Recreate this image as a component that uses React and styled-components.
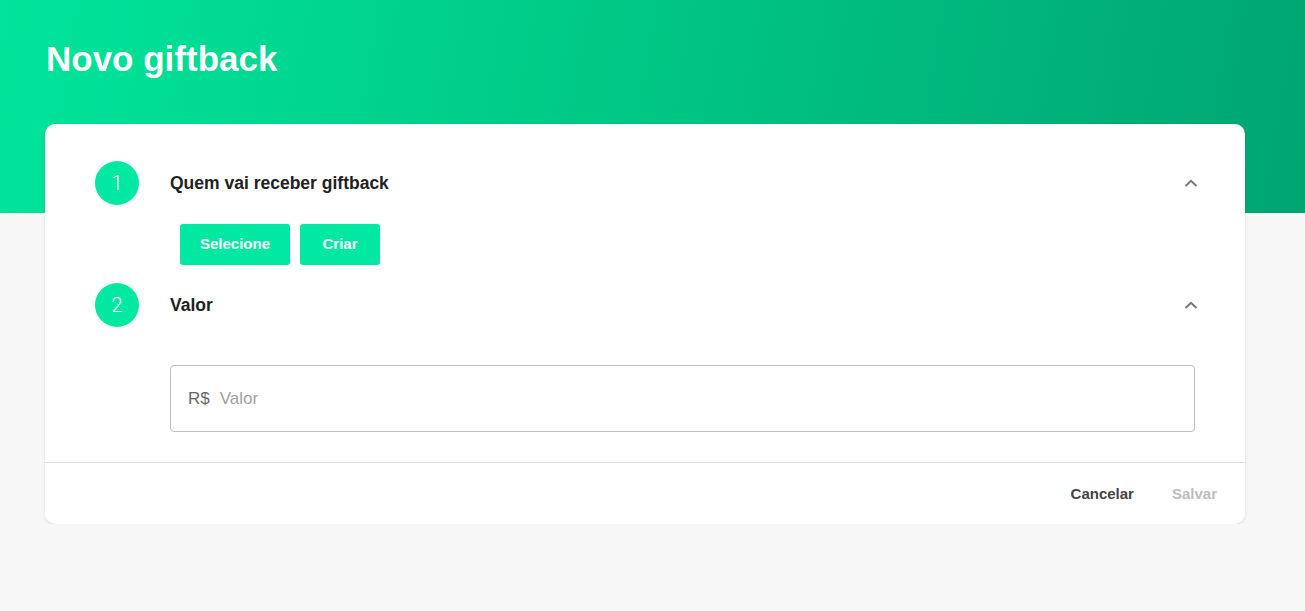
import React from "react";
import styled, { createGlobalStyle } from "styled-components";

const GlobalStyle = createGlobalStyle`
  body {
    margin: 0;
    background: #f7f7f7;
    font-family: "Liberation Sans", Arial, sans-serif;
  }
`;

const Hero = styled.div`
  height: 213px;
  box-sizing: border-box;
  padding: 38px 46px 0;
  background: linear-gradient(100deg, #00e59b 0%, #00c986 45%, #00a572 100%);
`;

const Title = styled.h1`
  margin: 0;
  font-size: 35px;
  font-weight: 700;
  color: #fff;
  line-height: 42px;
`;

const Card = styled.div`
  margin: -89px 60px 0 45px;
  background: #fff;
  border-radius: 10px;
  box-shadow: 0 1px 3px rgba(0, 0, 0, 0.12);
`;

const Body = styled.div`
  padding: 37px 46px 30px 50px;
`;

const StepRow = styled.div`
  display: flex;
  align-items: center;
  height: 44px;
  margin-top: ${(p) => p.$top || 0}px;
`;

const Circle = styled.div`
  width: 44px;
  height: 44px;
  border-radius: 50%;
  background: #00e8a2;
  color: #fff;
  display: flex;
  align-items: center;
  justify-content: center;
  font-family: Roboto, sans-serif;
  font-weight: 300;
  font-size: 20px;
`;

const StepTitle = styled.div`
  flex: 1;
  margin-left: 31px;
  font-size: 17.5px;
  font-weight: 700;
  color: #222;
`;

const Chevron = styled.svg`
  width: 16px;
  height: 16px;
`;

const Content = styled.div`
  padding: 0 4px 0 75px;
  margin-top: ${(p) => p.$top}px;
`;

const Actions = styled.div`
  display: flex;
  gap: 10px;
  padding-left: 10px;
`;

const GreenButton = styled.button`
  height: 41px;
  width: ${(p) => p.$w}px;
  border: 0;
  border-radius: 3px;
  background: #00e8a2;
  color: #fff;
  font-family: "Liberation Sans", Arial, sans-serif;
  font-weight: 700;
  font-size: 15px;
  padding: 0 0 2px;
  cursor: pointer;
`;

const InputBox = styled.div`
  height: 67px;
  box-sizing: border-box;
  border: 1px solid #bdbdbd;
  border-radius: 4px;
  display: flex;
  align-items: center;
  padding: 0 17px;
  font-size: 17px;
`;

const Prefix = styled.span`
  color: #666;
  margin-right: 10px;
`;

const Placeholder = styled.span`
  color: #a0a0a0;
`;

const Footer = styled.div`
  border-top: 1px solid #e0e0e0;
  height: 61px;
  display: flex;
  align-items: center;
  justify-content: flex-end;
  padding-right: 12px;
`;

const TextButton = styled.button`
  background: none;
  border: 0;
  padding: 0 16px 0 17px;
  font-family: "Liberation Sans", Arial, sans-serif;
  font-size: 15px;
  font-weight: 700;
  color: ${(p) => (p.$disabled ? "#bdbdbd" : "#444")};
  cursor: pointer;
  margin-left: ${(p) => p.$gap || 0}px;
`;

const Up = () => (
  <Chevron viewBox="0 0 16 16">
    <path d="M2.5 11 L8 5.8 L13.5 11" fill="none" stroke="#777" strokeWidth="2" />
  </Chevron>
);

export default function App() {
  return (
    <>
      <GlobalStyle />
      <Hero>
        <Title>Novo giftback</Title>
      </Hero>
      <Card>
        <Body>
          <StepRow>
            <Circle>1</Circle>
            <StepTitle>Quem vai receber giftback</StepTitle>
            <Up />
          </StepRow>
          <Content $top={19}>
            <Actions>
              <GreenButton $w={110}>Selecione</GreenButton>
              <GreenButton $w={80}>Criar</GreenButton>
            </Actions>
          </Content>
          <StepRow $top={18}>
            <Circle>2</Circle>
            <StepTitle>Valor</StepTitle>
            <Up />
          </StepRow>
          <Content $top={38}>
            <InputBox>
              <Prefix>R$</Prefix>
              <Placeholder>Valor</Placeholder>
            </InputBox>
          </Content>
        </Body>
        <Footer>
          <TextButton>Cancelar</TextButton>
          <TextButton $disabled $gap={5}>Salvar</TextButton>
        </Footer>
      </Card>
    </>
  );
}
